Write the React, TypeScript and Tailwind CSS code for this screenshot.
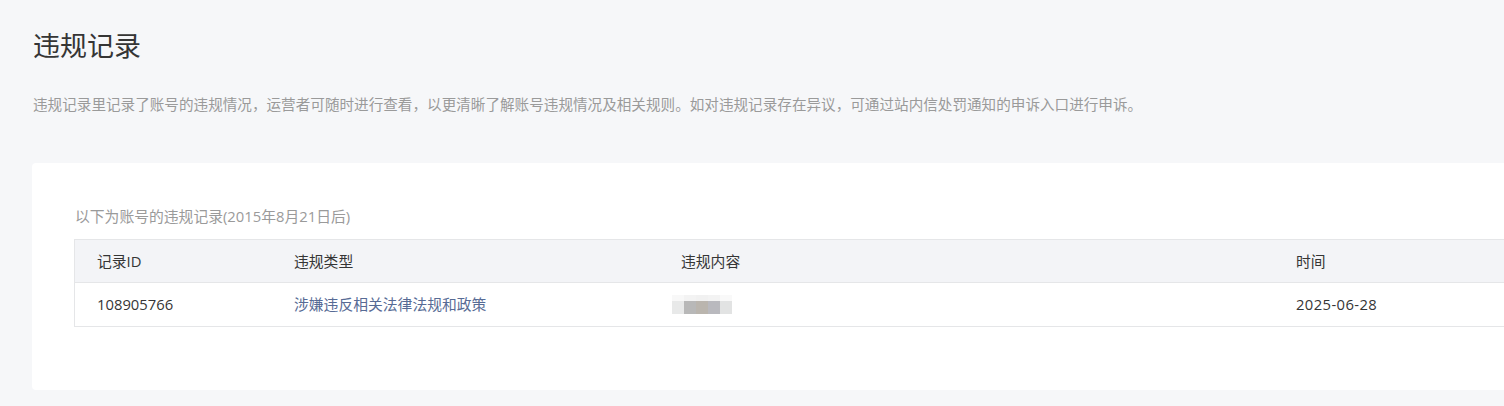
export default function App() {
  const cols = ["w-[197px]", "w-[387px]", "w-[615px]", "flex-1"];

  return (
    <div
      className="w-[1504px] h-[406px] overflow-hidden bg-[#f6f7f9] text-[#353535]"
      style={{ fontFamily: '"Open Sans", "Noto Sans CJK SC", sans-serif' }}
    >
      <div className="w-[1640px] pl-[32px] pt-[28px]">
        <h1 className="text-[27px] leading-[36px] font-normal pl-[1px]">违规记录</h1>
        <p className="mt-[30px] text-[14.6px] leading-[20px] text-[#9a9a9a] pl-[1px]">
          违规记录里记录了账号的违规情况，运营者可随时进行查看，以更清晰了解账号违规情况及相关规则。如对违规记录存在异议，可通过站内信处罚通知的申诉入口进行申诉。
        </p>

        {/* card */}
        <div className="mt-[49px] h-[227px] rounded-[4px] bg-white pl-[42px] pt-[43px]">
          <div className="text-[14.8px] leading-[20px] text-[#9a9a9a] pl-[1px]">
            以下为账号的违规记录(2015年8月21日后)
          </div>
          <div className="mt-[13px] border border-[#e5e6e8] text-[14.8px]">
            <div className="flex h-[43px] items-center bg-[#f3f4f7] border-b border-[#e5e6e8]">
              {["记录ID", "违规类型", "违规内容", "时间"].map((t, i) => (
                <div key={t} className={`${cols[i]} pl-[22px]`}>{t}</div>
              ))}
            </div>
            <div className="flex h-[43px] items-center">
              <div className={`${cols[0]} pl-[22px]`}>108905766</div>
              <div className={`${cols[1]} pl-[22px] text-[#576b95]`}>涉嫌违反相关法律法规和政策</div>
              <div className={`${cols[2]} pl-[13px]`}>
                {/* pixelated / masked content */}
                <div className="flex flex-col">
                  <div className="flex">
                    <span className="w-[12px] h-[6px] bg-[#f8f8f8]" />
                    <span className="w-[12px] h-[6px] bg-[#f3f3f3]" />
                    <span className="w-[12px] h-[6px] bg-[#f1f1f1]" />
                    <span className="w-[12px] h-[6px] bg-[#f3f3f3]" />
                    <span className="w-[12px] h-[6px] bg-[#f9f9f9]" />
                  </div>
                  <div className="flex">
                    <span className="w-[12px] h-[13px] bg-[#e8e9e9]" />
                    <span className="w-[12px] h-[13px] bg-[#b8b8b8]" />
                    <span className="w-[12px] h-[13px] bg-[#bab5ae]" />
                    <span className="w-[12px] h-[13px] bg-[#b9b9be]" />
                    <span className="w-[12px] h-[13px] bg-[#e2e3e3]" />
                  </div>
                </div>
              </div>
              <div className={`${cols[3]} pl-[22px] tracking-[0.4px]`}>2025-06-28</div>
            </div>
          </div>
        </div>
      </div>
    </div>
  );
}
